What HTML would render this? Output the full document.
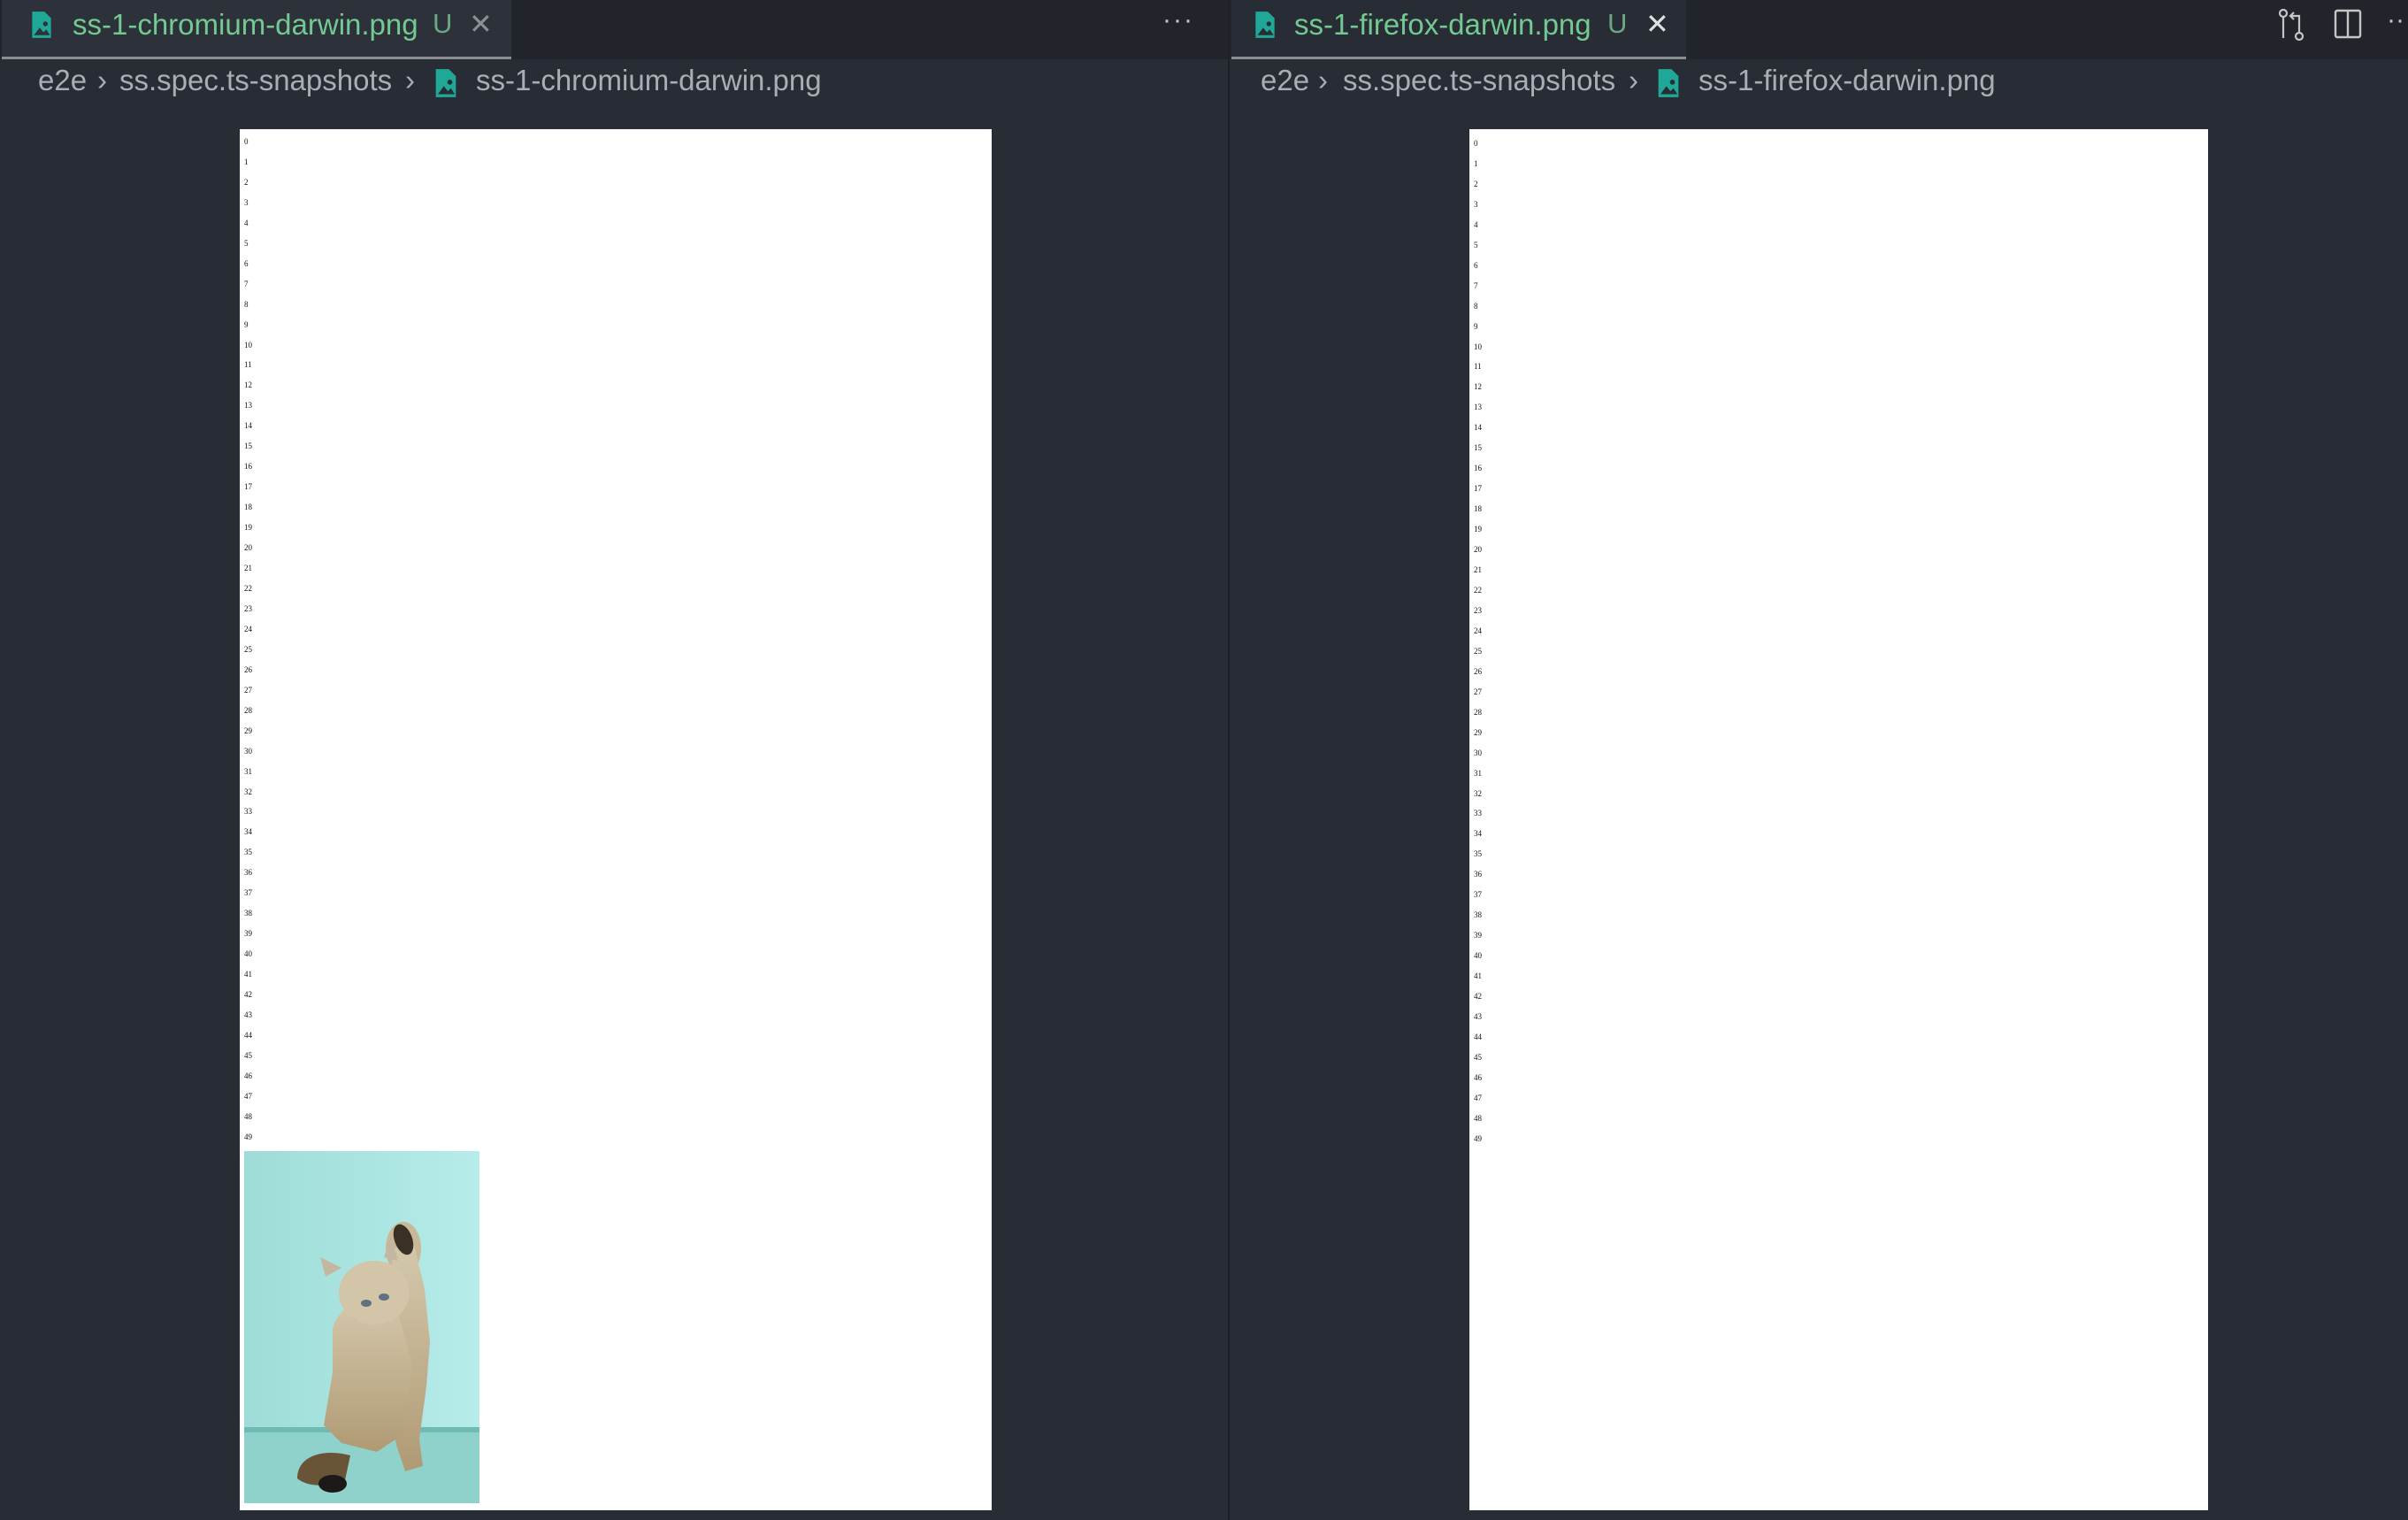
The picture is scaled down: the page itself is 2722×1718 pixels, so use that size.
<!DOCTYPE html>
<html><head><meta charset="utf-8"><style>
*{margin:0;padding:0;box-sizing:border-box}
body{width:2722px;height:1718px;background:#282c34;position:relative;overflow:hidden;font-family:"Liberation Sans",sans-serif}
.bar{position:absolute;top:0;height:67px;background:#21252b}
.tab{position:absolute;top:0;height:67px;background:#2c313a;border-bottom:3px solid #8a8d92}
.a{position:absolute;white-space:nowrap}
.t{top:9px;font-size:33px;color:#73c991}
.u{top:9px;font-size:31px;color:#6aa883}
.x{top:8px;font-size:32px;color:#8b8e94}
.b{top:72px;font-size:33px;color:#a9adb4}
.page{position:absolute;top:146px;height:1561px;background:#fff}
.nums{position:absolute;font-family:"Liberation Serif",serif;font-size:9px;color:#111;line-height:22.96px}
.div{position:absolute;left:1388px;top:0;width:2px;height:1718px;background:#1d2026}
</style></head><body>
<div class="bar" style="left:0;width:1388px"></div>
<div class="bar" style="left:1390px;width:1332px"></div>
<div class="div"></div>

<div class="tab" style="left:2px;width:576px"></div>
<svg class="a" style="left:35px;top:12px" width="24" height="32" viewBox="0 0 22 30"><path d="M1 1h13l7 7v21H1z" fill="#1fa898"/><path d="M3 26l6-8 4 5 3-3 4 6z" fill="#2c313a"/><circle cx="15" cy="14" r="2.5" fill="#2c313a"/></svg>
<div class="a t" style="left:82px">ss-1-chromium-darwin.png</div>
<div class="a u" style="left:489px">U</div>
<div class="a x" style="left:530px">✕</div>
<div class="a" style="left:1314px;top:6px;font-size:30px;color:#c8c8c8;letter-spacing:2px">···</div>

<div class="tab" style="left:1392px;width:514px;background:#282c34"></div>
<svg class="a" style="left:1418px;top:12px" width="24" height="32" viewBox="0 0 22 30"><path d="M1 1h13l7 7v21H1z" fill="#1fa898"/><path d="M3 26l6-8 4 5 3-3 4 6z" fill="#282c34"/><circle cx="15" cy="14" r="2.5" fill="#282c34"/></svg>
<div class="a t" style="left:1463px">ss-1-firefox-darwin.png</div>
<div class="a u" style="left:1817px">U</div>
<div class="a x" style="left:1860px;color:#e0e0e0">✕</div>

<svg class="a" style="left:2573px;top:8px" width="36" height="40" viewBox="0 0 36 40" fill="none" stroke="#c5c5c5" stroke-width="2.2"><circle cx="8" cy="7" r="4"/><path d="M8 11v24"/><circle cx="26" cy="33" r="4"/><path d="M26 29V10h-9M20 6l-4 4 4 4"/></svg>
<svg class="a" style="left:2638px;top:10px" width="32" height="34" viewBox="0 0 32 34" fill="none" stroke="#c5c5c5" stroke-width="2.4"><rect x="2" y="2" width="28" height="30" rx="2"/><path d="M16 2v30"/></svg>
<div class="a" style="left:2698px;top:6px;font-size:30px;color:#c8c8c8">··</div>

<div class="a b" style="left:43px">e2e</div>
<div class="a b" style="left:110px">›</div>
<div class="a b" style="left:135px">ss.spec.ts-snapshots</div>
<div class="a b" style="left:458px">›</div>
<svg class="a" style="left:491px;top:77px" width="26" height="34" viewBox="0 0 22 30"><path d="M1 1h13l7 7v21H1z" fill="#1fa898"/><path d="M3 26l6-8 4 5 3-3 4 6z" fill="#282c34"/><circle cx="15" cy="14" r="2.5" fill="#282c34"/></svg>
<div class="a b" style="left:538px">ss-1-chromium-darwin.png</div>

<div class="a b" style="left:1425px">e2e</div>
<div class="a b" style="left:1490px">›</div>
<div class="a b" style="left:1518px">ss.spec.ts-snapshots</div>
<div class="a b" style="left:1841px">›</div>
<svg class="a" style="left:1873px;top:77px" width="26" height="34" viewBox="0 0 22 30"><path d="M1 1h13l7 7v21H1z" fill="#1fa898"/><path d="M3 26l6-8 4 5 3-3 4 6z" fill="#282c34"/><circle cx="15" cy="14" r="2.5" fill="#282c34"/></svg>
<div class="a b" style="left:1920px">ss-1-firefox-darwin.png</div>

<div class="page" style="left:271px;width:850px"></div>
<div class="page" style="left:1661px;width:835px"></div>

<div class="nums" style="left:276px;top:149px">0<br>1<br>2<br>3<br>4<br>5<br>6<br>7<br>8<br>9<br>10<br>11<br>12<br>13<br>14<br>15<br>16<br>17<br>18<br>19<br>20<br>21<br>22<br>23<br>24<br>25<br>26<br>27<br>28<br>29<br>30<br>31<br>32<br>33<br>34<br>35<br>36<br>37<br>38<br>39<br>40<br>41<br>42<br>43<br>44<br>45<br>46<br>47<br>48<br>49</div>
<div class="nums" style="left:1666px;top:151px">0<br>1<br>2<br>3<br>4<br>5<br>6<br>7<br>8<br>9<br>10<br>11<br>12<br>13<br>14<br>15<br>16<br>17<br>18<br>19<br>20<br>21<br>22<br>23<br>24<br>25<br>26<br>27<br>28<br>29<br>30<br>31<br>32<br>33<br>34<br>35<br>36<br>37<br>38<br>39<br>40<br>41<br>42<br>43<br>44<br>45<br>46<br>47<br>48<br>49</div>

<svg style="position:absolute;left:276px;top:1301px" width="266" height="398" viewBox="0 0 266 398">
<defs><linearGradient id="w" x1="0" y1="0" x2="1" y2="0"><stop offset="0" stop-color="#9edcd8"/><stop offset="1" stop-color="#b6ecea"/></linearGradient>
<linearGradient id="f" x1="0" y1="0" x2="0" y2="1"><stop offset="0" stop-color="#d4c8ac"/><stop offset="1" stop-color="#b09a74"/></linearGradient></defs>
<rect width="266" height="398" fill="url(#w)"/>
<rect y="312" width="266" height="86" fill="#8fd2cc"/>
<rect y="312" width="266" height="6" fill="#6fbab4"/>
<ellipse cx="180" cy="110" rx="20" ry="30" fill="#c8b898"/>
<path d="M170 110l22 -4 12 50 6 60 -4 50 -8 60 4 30 -20 6 -10 -30 -10 -60 -10 -60z" fill="url(#f)"/>
<path d="M100 200c10 -30 40 -40 70 -30l20 70 -10 80 -30 20 -40 -10 -20 -20 10 -60z" fill="url(#f)"/>
<path d="M60 370c0 -26 30 -34 60 -26l-6 28c-20 8 -42 8 -54 -2z" fill="#6a5438"/>
<ellipse cx="100" cy="376" rx="16" ry="10" fill="#1c1a18"/>
<ellipse cx="147" cy="160" rx="40" ry="36" fill="#d2c5a8"/>
<path d="M92 142l-6 -22 24 12zM158 120l8 -24 8 28z" fill="#c4b6a0"/>
<ellipse cx="180" cy="100" rx="10" ry="18" fill="#3a3026" transform="rotate(-20 180 100)"/>
<ellipse cx="138" cy="172" rx="6" ry="4" fill="#5f7280"/><ellipse cx="158" cy="165" rx="6" ry="4" fill="#5f7280"/>
</svg>
</body></html>
